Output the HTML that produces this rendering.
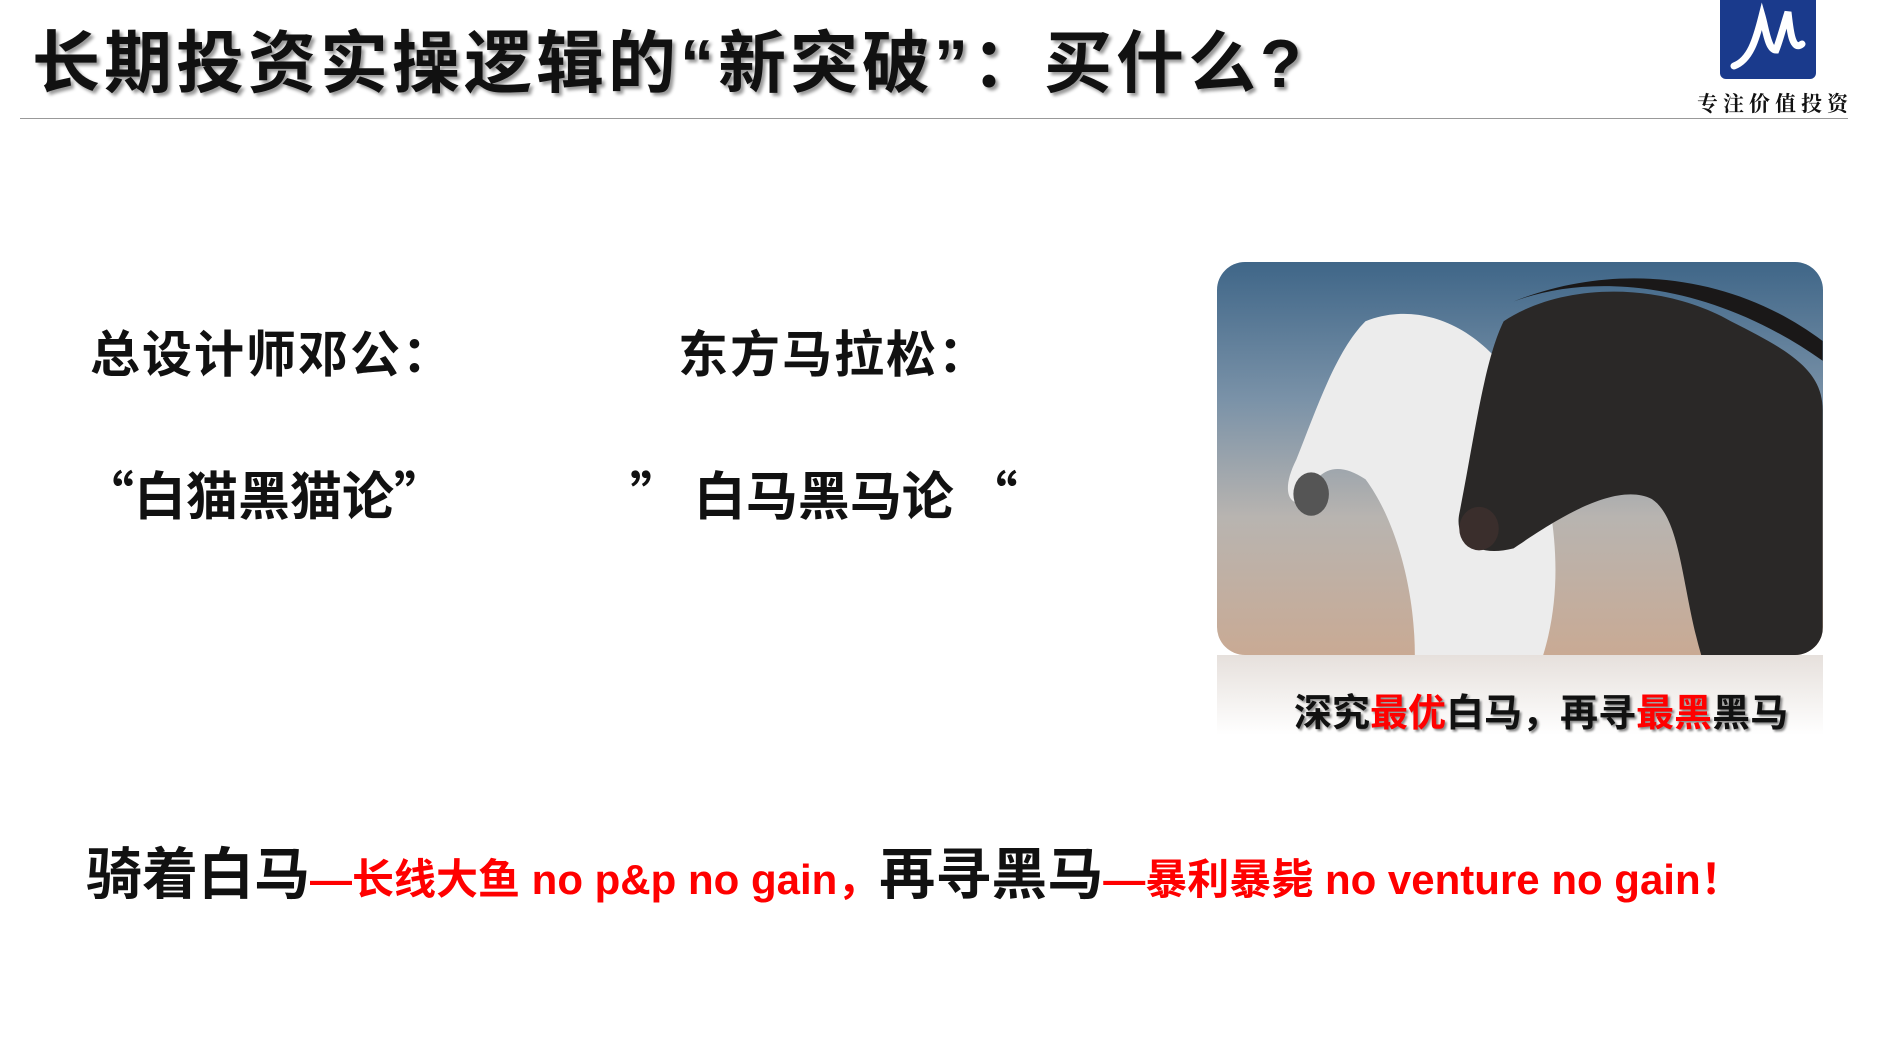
<!DOCTYPE html>
<html><head><meta charset="utf-8"><style>
body{margin:0;width:1903px;height:1040px;background:#fff;position:relative;overflow:hidden;font-family:"Liberation Sans","Noto Sans CJK SC",sans-serif;}
.a{position:absolute;white-space:nowrap;font-weight:bold;color:#111;}
.c{font-family:"Noto Sans CJK SC",sans-serif;}
.r{color:#f00}
</style></head><body>
<div class="a" style="left:32px;top:24px;font-size:68px;line-height:80px;text-shadow:3px 3px 3px #999;letter-spacing:4px">长期投资实操逻辑的“新突破”：买什么?</div>
<div style="position:absolute;left:20px;top:118px;width:1828px;height:1px;background:#999"></div>
<div style="position:absolute;left:1720px;top:0;width:96px;height:79px;background:#1a3a8c;border-radius:0 0 6px 6px">
<svg width="96" height="79" viewBox="0 0 96 79"><path d="M14 66 C30 60 36 40 42 16 C46 30 48 50 56 50 C60 40 64 24 68 12 C70 30 72 52 82 44" fill="none" stroke="#fff" stroke-width="7" stroke-linecap="round"/></svg></div>
<div class="a" style="left:1697px;top:88px;font-size:21px;font-weight:bold;letter-spacing:5px;font-family:'Noto Serif CJK SC',serif">专注价值投资</div>
<div class="a c" style="left:90px;top:316px;font-size:50px;line-height:70px;letter-spacing:2px">总设计师邓公：</div>
<div class="a c" style="left:678px;top:316px;font-size:50px;line-height:70px;letter-spacing:2px">东方马拉松：</div>
<div class="a c" style="left:82px;top:458px;font-size:52px;line-height:70px">“白猫黑猫论”</div>
<div class="a c" style="left:630px;top:458px;font-size:52px;line-height:70px">” 白马黑马论 “</div>
<div style="position:absolute;left:1217px;top:262px;width:606px;height:393px;border-radius:28px;overflow:hidden;background:linear-gradient(#3f6688 0%,#7a92a8 35%,#b8b4b0 65%,#c9aa94 100%)">
<svg width="606" height="393" viewBox="0 0 613 398">
<path d="M150 60 C200 40 260 60 300 120 C330 200 360 300 330 398 L200 398 C200 330 180 260 150 220 C120 200 100 210 90 240 C80 250 60 240 80 200 C100 150 120 90 150 60Z" fill="#ececec"/>
<ellipse cx="95" cy="235" rx="18" ry="22" fill="#555"/>
<path d="M290 60 C350 20 450 20 520 60 C580 90 613 110 613 150 L613 398 L490 398 C470 330 470 260 440 240 C400 220 330 270 300 290 C260 300 240 280 245 255 C260 180 270 100 290 60Z" fill="#2a2827"/>
<path d="M300 40 C380 10 500 20 613 100 L613 80 C520 10 400 0 300 40Z" fill="#1a1818"/>
<ellipse cx="265" cy="270" rx="20" ry="22" fill="#3a2e2c"/>
</svg></div>
<div style="position:absolute;left:1217px;top:655px;width:606px;height:80px;background:linear-gradient(#e6e0dc,#fff)"></div>
<div class="a" style="left:1294px;top:689px;font-size:38px;line-height:50px;text-shadow:2px 2px 2px #888">深究<span class="r">最优</span>白马，再寻<span class="r">最黑</span>黑马</div>
<div class="a" style="left:86px;top:840px;font-size:56px;line-height:70px">骑着白马<span class="r" style="font-size:42px">—长线大鱼 no p&amp;p no gain，</span>再寻黑马<span class="r" style="font-size:42px">—暴利暴毙 no venture no gain！</span></div>
</body></html>
